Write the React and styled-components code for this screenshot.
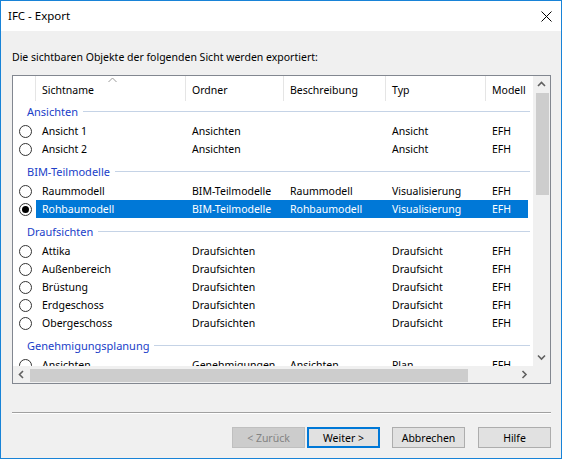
import React from 'react';
import styled, { createGlobalStyle } from 'styled-components';

const Global = createGlobalStyle`
  html, body { margin: 0; padding: 0; background: #fff; }
  body { font-family: "Noto Sans", Lato, sans-serif; font-size: 10.5px; color: #000; }
`;

const Window = styled.div`
  width: 562px;
  height: 459px;
  box-sizing: border-box;
  border: 1px solid #1883d7;
  display: flex;
  flex-direction: column;
  background: #f0f0f0;
  overflow: hidden;
`;

const TitleBar = styled.div`
  height: 30px;
  flex: none;
  background: #fff;
  display: flex;
  align-items: center;
  justify-content: space-between;
  padding: 0 9px 0 7px;
`;

const Title = styled.span`
  font-size: 11.5px;
  line-height: 16px;
`;

const Body = styled.div`
  flex: 1;
  display: flex;
  flex-direction: column;
  padding: 18px 10px 0 11px;
`;

const Label = styled.div`
  line-height: 16px;
  height: 16px;
  margin-bottom: 10px;
  white-space: nowrap;
`;

const ListBox = styled.div`
  width: 539px;
  height: 309px;
  box-sizing: border-box;
  border: 1px solid #828790;
  background: #fff;
  display: grid;
  grid-template-columns: 520px 17px;
  grid-template-rows: 290px 17px;
`;

const Viewport = styled.div`
  overflow: hidden;
  position: relative;
`;

const Content = styled.div`
  width: 577px;
`;

const cols = [22, 150, 98, 102, 100, 105];

const HeaderRow = styled.div`
  display: flex;
  height: 25px;
  position: relative;
`;

const HeaderCell = styled.div`
  width: ${p => p.$w}px;
  flex: none;
  box-sizing: border-box;
  border-left: ${p => (p.$first ? 'none' : '1px solid #e5e5e5')};
  padding-left: 6px;
  display: flex;
  align-items: center;
  padding-top: 2px;
  white-space: nowrap;
`;

const SortArrow = styled.svg`
  position: absolute;
  left: 95px;
  top: 1px;
`;

const GroupHeader = styled.div`
  width: 517px;
  height: 21px;
  margin-top: ${p => (p.$first ? 0 : 3)}px;
  display: flex;
  align-items: center;
  padding-left: 14px;
  box-sizing: border-box;
  color: #2040c8;
  font-size: 11px;
  white-space: nowrap;
`;

const GroupLine = styled.div`
  flex: 1;
  height: 1px;
  margin-left: 5px;
  background: #c5d3e6;
`;

const Row = styled.div`
  display: flex;
  height: 18px;
  align-items: center;
`;

const RadioCell = styled.div`
  width: 22px;
  flex: none;
  display: flex;
  align-items: center;
  padding-left: 6px;
  box-sizing: border-box;
`;

const Radio = styled.div`
  width: 13px;
  height: 13px;
  box-sizing: border-box;
  border-radius: 50%;
  border: 1px solid #333;
  display: flex;
  align-items: center;
  justify-content: center;
  &::after {
    content: '';
    width: 7px;
    height: 7px;
    border-radius: 50%;
    background: ${p => (p.$checked ? '#000' : 'transparent')};
  }
`;

const RowMain = styled.div`
  display: flex;
  height: 18px;
  align-items: center;
  color: ${p => (p.$selected ? '#fff' : '#000')};
  background: ${p =>
    p.$selected ? 'linear-gradient(#0078d7, #0078d7) 1px 0 / 492px 100% no-repeat' : 'none'};
`;

const Cell = styled.div`
  width: ${p => p.$w}px;
  flex: none;
  box-sizing: border-box;
  padding-left: 7px;
  white-space: nowrap;
  overflow: hidden;
  line-height: 18px;
`;

const VScroll = styled.div`
  background: #f0f0f0;
  display: flex;
  flex-direction: column;
`;

const HScroll = styled.div`
  background: #f0f0f0;
  display: flex;
`;

const Corner = styled.div`
  background: #f0f0f0;
`;

const ArrowBox = styled.div`
  width: 17px;
  height: 17px;
  flex: none;
  display: flex;
  align-items: center;
  justify-content: center;
`;

const VTrack = styled.div`
  flex: 1;
  display: flex;
  justify-content: center;
`;

const VThumb = styled.div`
  width: 13px;
  height: 102px;
  margin-left: 2px;
  background: #cdcdcd;
`;

const HTrack = styled.div`
  flex: 1;
  display: flex;
  align-items: center;
`;

const HThumb = styled.div`
  width: 438px;
  height: 13px;
  margin-top: 2px;
  background: #cdcdcd;
`;

const Separator = styled.div`
  height: 1px;
  background: #a0a0a0;
  border-bottom: 1px solid #fff;
  margin-top: 28px;
`;

const ButtonRow = styled.div`
  display: flex;
  justify-content: flex-end;
  margin-top: 13px;
`;

const Button = styled.button`
  width: 73px;
  height: 21px;
  box-sizing: border-box;
  margin-left: ${p => p.$gap}px;
  font-family: inherit;
  font-size: 10.5px;
  padding: 0;
  background: ${p => (p.$disabled ? '#cccccc' : '#e1e1e1')};
  color: ${p => (p.$disabled ? '#838383' : '#000')};
  border: ${p => (p.$default ? '2px solid #0078d7' : p.$disabled ? '1px solid #bfbfbf' : '1px solid #adadad')};
  border-radius: 0;
  outline: none;
`;

const Chevron = ({ dir }) => {
  const paths = {
    up: 'M1 5 L4.5 1.5 L8 5',
    down: 'M1 1.5 L4.5 5 L8 1.5',
    left: 'M5 1 L1.5 4.5 L5 8',
    right: 'M1.5 1 L5 4.5 L1.5 8',
  };
  const vertical = dir === 'up' || dir === 'down';
  return (
    <svg width={vertical ? 9 : 7} height={vertical ? 7 : 9} viewBox={vertical ? '0 0 9 7' : '0 0 7 9'}>
      <path d={paths[dir]} fill="none" stroke="#606060" strokeWidth="1.6" />
    </svg>
  );
};

const groups = [
  {
    name: 'Ansichten',
    rows: [
      ['Ansicht 1', 'Ansichten', '', 'Ansicht', 'EFH'],
      ['Ansicht 2', 'Ansichten', '', 'Ansicht', 'EFH'],
    ],
  },
  {
    name: 'BIM-Teilmodelle',
    rows: [
      ['Raummodell', 'BIM-Teilmodelle', 'Raummodell', 'Visualisierung', 'EFH'],
      ['Rohbaumodell', 'BIM-Teilmodelle', 'Rohbaumodell', 'Visualisierung', 'EFH', true],
    ],
  },
  {
    name: 'Draufsichten',
    rows: [
      ['Attika', 'Draufsichten', '', 'Draufsicht', 'EFH'],
      ['Außenbereich', 'Draufsichten', '', 'Draufsicht', 'EFH'],
      ['Brüstung', 'Draufsichten', '', 'Draufsicht', 'EFH'],
      ['Erdgeschoss', 'Draufsichten', '', 'Draufsicht', 'EFH'],
      ['Obergeschoss', 'Draufsichten', '', 'Draufsicht', 'EFH'],
    ],
  },
  {
    name: 'Genehmigungsplanung',
    rows: [['Ansichten', 'Genehmigungen', 'Ansichten', 'Plan', 'EFH']],
  },
];

const headers = ['Sichtname', 'Ordner', 'Beschreibung', 'Typ', 'Modell'];

export default function App() {
  return (
    <>
      <Global />
      <Window>
        <TitleBar>
          <Title>IFC - Export</Title>
          <svg width="11" height="11" viewBox="0 0 11 11">
            <path d="M0.5 0.5 L10.5 10.5 M10.5 0.5 L0.5 10.5" stroke="#000" strokeWidth="1" />
          </svg>
        </TitleBar>
        <Body>
          <Label>Die sichtbaren Objekte der folgenden Sicht werden exportiert:</Label>
          <ListBox>
            <Viewport>
              <Content>
                <HeaderRow>
                  <HeaderCell $w={cols[0]} $first />
                  {headers.map((h, i) => (
                    <HeaderCell key={h} $w={cols[i + 1]}>{h}</HeaderCell>
                  ))}
                  <SortArrow width="9" height="6" viewBox="0 0 9 6">
                    <path d="M0.5 5 L4.5 1 L8.5 5" fill="none" stroke="#9a9a9a" strokeWidth="1" />
                  </SortArrow>
                </HeaderRow>
                {groups.map((g, gi) => (
                  <React.Fragment key={g.name}>
                    <GroupHeader $first={gi === 0}>
                      {g.name}
                      <GroupLine />
                    </GroupHeader>
                    {g.rows.map(r => (
                      <Row key={r[0] + gi}>
                        <RadioCell>
                          <Radio $checked={!!r[5]} />
                        </RadioCell>
                        <RowMain $selected={!!r[5]}>
                          {r.slice(0, 5).map((c, ci) => (
                            <Cell key={ci} $w={cols[ci + 1]}>{c}</Cell>
                          ))}
                        </RowMain>
                      </Row>
                    ))}
                  </React.Fragment>
                ))}
              </Content>
            </Viewport>
            <VScroll>
              <ArrowBox><Chevron dir="up" /></ArrowBox>
              <VTrack><VThumb /></VTrack>
              <ArrowBox><Chevron dir="down" /></ArrowBox>
            </VScroll>
            <HScroll>
              <ArrowBox><Chevron dir="left" /></ArrowBox>
              <HTrack><HThumb /></HTrack>
              <ArrowBox><Chevron dir="right" /></ArrowBox>
            </HScroll>
            <Corner />
          </ListBox>
          <Separator />
          <ButtonRow>
            <Button $disabled $gap={0}>&lt; Zurück</Button>
            <Button $default $gap={2}>Weiter &gt;</Button>
            <Button $gap={12}>Abbrechen</Button>
            <Button $gap={13}>Hilfe</Button>
          </ButtonRow>
        </Body>
      </Window>
    </>
  );
}
